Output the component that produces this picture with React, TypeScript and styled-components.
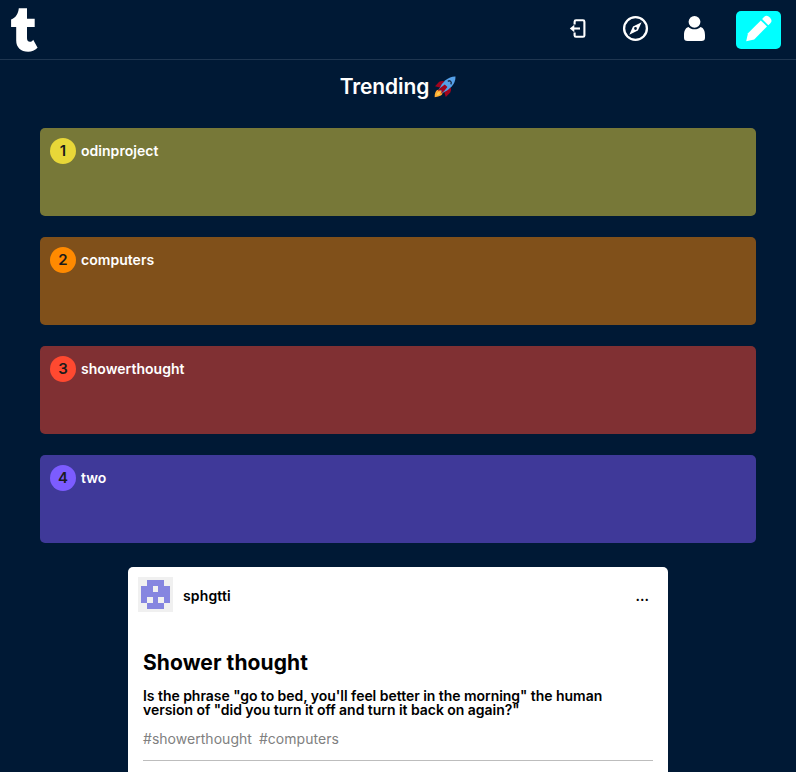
import React from "react";
import styled, { createGlobalStyle } from "styled-components";

const GlobalStyle = createGlobalStyle`
  *, *::before, *::after { box-sizing: border-box; }
  body {
    margin: 0;
    background: #001935;
    font-family: Inter, "Liberation Sans", sans-serif;
    font-size: 14px;
    overflow: hidden;
  }
  h1, h2, h3, p { margin: 0; }
`;

const Page = styled.div`
  display: flex;
  flex-direction: column;
  align-items: center;
  height: 772px;
  overflow: hidden;
`;

const Header = styled.header`
  display: flex;
  align-items: center;
  justify-content: space-between;
  width: 100%;
  height: 60px;
  flex: none;
  padding: 0 15px 0 10px;
  border-bottom: 1px solid #1f3650;
`;

const Nav = styled.nav`
  display: flex;
  align-items: center;
`;

const IconLink = styled.a<{ $gap: number }>`
  display: flex;
  width: 28px;
  height: 28px;
  margin-right: ${(p) => p.$gap}px;
  margin-bottom: 3px;
  color: #fff;
`;

const ComposeButton = styled.button`
  display: flex;
  align-items: center;
  justify-content: center;
  width: 45px;
  height: 38px;
  margin-top: 1px;
  padding: 0 0 2px 0;
  border: 0;
  border-radius: 5px;
  background: #00ffff;
`;

const Title = styled.h1`
  display: flex;
  align-items: center;
  gap: 5px;
  height: 27px;
  margin-top: 13px;
  flex: none;
  color: #fff;
  font-size: 21px;
  font-weight: 600;
  letter-spacing: -0.1px;
  line-height: 27px;
`;

const TrendList = styled.div`
  display: flex;
  flex-direction: column;
  gap: 21px;
  width: 716px;
  margin-top: 28px;
  flex: none;
`;

const Trend = styled.div<{ $bg: string }>`
  display: flex;
  gap: 5px;
  height: 88px;
  padding: 10px;
  border-radius: 5px;
  background: ${(p) => p.$bg};
`;

const Rank = styled.span<{ $bg: string }>`
  width: 26px;
  height: 26px;
  border-radius: 50%;
  background: ${(p) => p.$bg};
  color: #1b1b1b;
  font-size: 15px;
  font-weight: 600;
  line-height: 26px;
  text-align: center;
`;

const TrendName = styled.span`
  color: #fff;
  font-weight: 600;
  letter-spacing: 0.03px;
  line-height: 26px;
`;

const Post = styled.article`
  display: flex;
  flex-direction: column;
  width: 540px;
  height: 300px;
  flex: none;
  margin-top: 24px;
  border-radius: 5px;
  background: #fff;
  color: #000;
`;

const PostHeader = styled.div`
  display: flex;
  align-items: center;
  height: 55px;
  padding: 0 19px 0 10px;
`;

const Author = styled.span`
  margin: 1px auto 0 10px;
  font-weight: 600;
  letter-spacing: 0.15px;
`;

const More = styled.span`
  font-weight: 600;
  margin-top: 2px;
`;

const PostBody = styled.div`
  display: flex;
  flex-direction: column;
  margin: 28px 15px 0;
`;

const PostTitle = styled.h2`
  font-size: 21px;
  font-weight: 700;
  letter-spacing: 0.08px;
  line-height: 26px;
`;

const PostText = styled.p`
  margin-top: 13px;
  font-weight: 600;
  letter-spacing: -0.04px;
  line-height: 14px;
`;

const Tags = styled.div`
  display: flex;
  gap: 7px;
  height: 44px;
  padding-top: 13px;
  border-bottom: 1px solid #bdbdbd;
  color: #808080;
  letter-spacing: 0.03px;
  line-height: 18px;
`;

const Logo = () => (
  <svg width="28" height="46" viewBox="10 7 28 46" fill="#fff">
    <path d="M18.8 8.3H27V18.7H34.7V27H27V38.2C27 41.5 29.3 42.3 31.5 41.4C32.2 41.1 32.8 40.5 33.2 39.8L37.6 47.8C34.7 50.5 31.8 51.8 28.2 51.8C20.8 51.8 16.2 47.6 16.2 40.6V27H11.1V19.6C15.7 18 18.3 13.6 18.8 8.3Z" />
  </svg>
);

const LogoutIcon = () => (
  <svg width="28" height="28" viewBox="564 14 28 28" fill="none" stroke="#fff" strokeWidth="2.1">
    <path d="M574.6 24.6V21.7Q574.6 20.3 576 20.3H583Q584.4 20.3 584.4 21.7V35.4Q584.4 36.8 583 36.8H576Q574.6 36.8 574.6 35.4V32.5" />
    <path d="M580 28.5H573" />
    <path d="M574.3 24.8V32.2L569.8 28.5Z" fill="#fff" stroke="none" />
  </svg>
);

const CompassIcon = () => (
  <svg width="28" height="28" viewBox="622 14 28 28" fill="none">
    <circle cx="635.5" cy="28.5" r="11.4" stroke="#fff" strokeWidth="2.3" />
    <path fill="#fff" fillRule="evenodd" d="M641.6 22.3L637.9 30.5L629.3 34.8L633 26.5ZM635.5 27.1A1.4 1.4 0 1 0 635.5 29.9A1.4 1.4 0 1 0 635.5 27.1Z" />
  </svg>
);

const UserIcon = () => (
  <svg width="28" height="28" viewBox="681 14 28 28" fill="#fff">
    <circle cx="694.5" cy="21.8" r="5.9" />
    <path d="M688.4 26.9C690 28.6 692.1 29.3 694.5 29.3S699 28.6 700.6 26.9C703.7 27.8 705 31 705 35V37.8C705 40 703.8 41 701.5 41H687.5C685.2 41 684 40 684 37.8V35C684 31 685.3 27.8 688.4 26.9Z" />
  </svg>
);

const PencilIcon = () => (
  <svg width="28" height="28" viewBox="744.5 15 28 28" fill="#fff">
    <path d="M745.7 41.2L747.5 33.3L760.3 20.4L766.5 26.6L753.7 39.4Z" />
    <path d="M761.6 19.1L763.5 17.1Q766.3 14.5 769.3 17.4Q772.5 20.5 769.8 23.3L767.8 25.3Z" />
  </svg>
);

const RocketIcon = () => (
  <svg width="22" height="22" viewBox="0 0 22 22">
    <path fill="#a0041e" d="M1 10.2L5.2 5.7Q8 4.5 10.7 5.2L6 11.5ZM11.8 20.9L16.3 16.5Q17.5 13.8 16.7 11L10.2 16Z" />
    <path fill="#ffac33" d="M0.7 21.3Q.5 15.7 3.3 14Q6.2 12.7 8.1 15Q9.3 18 6.8 19.6Q4.8 20.6.7 21.3Z" />
    <path fill="#ffcc4d" d="M2.5 19.5Q3 16.5 4.5 16Q6.4 15.9 6 17.6Q5.2 19.1 2.5 19.5Z" />
    <path fill="#55a0e8" d="M21.5.5Q16.2.3 11.4 4.3Q7 8.1 5.1 13.1L8.7 16.9Q13.8 15 17.7 10.6Q21.7 6 21.5.5Z" />
    <path fill="#a0041e" d="M3.6 15.6Q6 11.4 10.8 8.6L13.4 11.1Q10.2 16 6.3 18.3Q8 15.8 7.6 14.4Q6.2 14 3.6 15.6Z" />
    <path fill="none" stroke="#1c2f4c" strokeWidth="1.4" d="M13.8 5.3Q15.4 4.2 16.7 5.4Q17.9 6.7 16.8 8.3" />
  </svg>
);

const IDENTICON_ROWS = ["01110", "11011", "11111", "10101", "01110"];

const cellEdge = (i: number) => Math.round(2.9 + i * 5.84);

const Identicon = () => (
  <svg width="35" height="35" viewBox="0 0 35 35">
    <rect width="35" height="35" fill="#f0f0f0" />
    {IDENTICON_ROWS.map((row, y) =>
      [...row].map((on, x) =>
        on === "1" ? (
          <rect
            key={`${x}-${y}`}
            x={cellEdge(x)}
            y={cellEdge(y)}
            width={cellEdge(x + 1) - cellEdge(x)}
            height={cellEdge(y + 1) - cellEdge(y)}
            fill="#8585e0"
          />
        ) : null
      )
    )}
  </svg>
);

const TRENDS = [
  { name: "odinproject", bg: "#777838", accent: "#e8d738" },
  { name: "computers", bg: "#80501a", accent: "#ff8a00" },
  { name: "showerthought", bg: "#803033", accent: "#ff4930" },
  { name: "two", bg: "#3f3999", accent: "#7c5cff" },
];

export default function App() {
  return (
    <>
      <GlobalStyle />
      <Page>
        <Header>
          <Logo />
          <Nav>
            <IconLink $gap={30}><LogoutIcon /></IconLink>
            <IconLink $gap={31}><CompassIcon /></IconLink>
            <IconLink $gap={27}><UserIcon /></IconLink>
            <ComposeButton><PencilIcon /></ComposeButton>
          </Nav>
        </Header>
        <Title>Trending <RocketIcon /></Title>
        <TrendList>
          {TRENDS.map((trend, i) => (
            <Trend key={trend.name} $bg={trend.bg}>
              <Rank $bg={trend.accent}>{i + 1}</Rank>
              <TrendName>{trend.name}</TrendName>
            </Trend>
          ))}
        </TrendList>
        <Post>
          <PostHeader>
            <Identicon />
            <Author>sphgtti</Author>
            <More>...</More>
          </PostHeader>
          <PostBody>
            <PostTitle>Shower thought</PostTitle>
            <PostText>
              Is the phrase "go to bed, you'll feel better in the morning" the human version of "did you turn it off
              and turn it back on again?"
            </PostText>
            <Tags>
              <span>#showerthought</span>
              <span>#computers</span>
            </Tags>
          </PostBody>
        </Post>
      </Page>
    </>
  );
}
